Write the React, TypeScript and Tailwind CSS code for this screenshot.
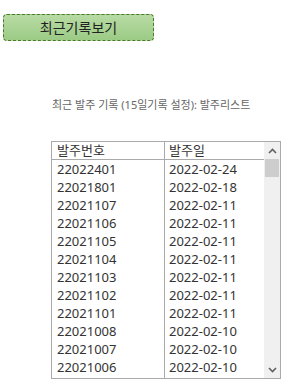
import React from "react";

const rows: [string, string][] = [
  ["22022401", "2022-02-24"],
  ["22021801", "2022-02-18"],
  ["22021107", "2022-02-11"],
  ["22021106", "2022-02-11"],
  ["22021105", "2022-02-11"],
  ["22021104", "2022-02-11"],
  ["22021103", "2022-02-11"],
  ["22021102", "2022-02-11"],
  ["22021101", "2022-02-11"],
  ["22021008", "2022-02-10"],
  ["22021007", "2022-02-10"],
  ["22021006", "2022-02-10"],
];

const font = { fontFamily: '"Noto Sans", "Noto Sans CJK KR", sans-serif' };

const App = () => {
  return (
    <div className="w-[291px] h-[392px] bg-white relative" style={font}>
      {/* 버튼 */}
      <div className="pt-[14px] pl-[3px]">
        <button className="w-[151px] h-[27px] rounded-[4px] border border-dashed border-[#4a7a2c] bg-gradient-to-b from-[#b8dba4] to-[#9bcb85] text-[14px] text-[#222] flex items-center justify-center">
          최근기록보기
        </button>
      </div>

      {/* 설명 */}
      <p className="mt-[57px] ml-[52px] text-[11px] leading-[14px] text-[#666]">
        최근 발주 기록 (15일기록 설정): 발주리스트
      </p>

      {/* 리스트 */}
      <div className="mt-[29px] ml-[51px] w-[230px] h-[238px] border border-[#aaa] flex overflow-hidden">
        <div className="flex-1 flex flex-col">
          <div className="flex h-[18px] border-b border-[#aaa] text-[13px] leading-[17px] text-[#333]">
            <div className="w-[113px] border-r border-[#aaa] pl-[5px]">발주번호</div>
            <div className="flex-1 pl-[4px]">발주일</div>
          </div>
          {rows.map(([no, date]) => (
            <div key={no} className="flex h-[18px] shrink-0 text-[13px] leading-[18px] text-[#333]">
              <div className="w-[113px] border-r border-[#aaa] pl-[5px]">{no}</div>
              <div className="flex-1 pl-[4px]">{date}</div>
            </div>
          ))}
          <div className="flex flex-1">
            <div className="w-[113px] border-r border-[#aaa]" />
          </div>
        </div>

        {/* 스크롤바 */}
        <div className="w-[16px] bg-[#f0f0f0] flex flex-col">
          <div className="h-[17px] flex items-center justify-center">
            <svg width="9" height="6" viewBox="0 0 9 6">
              <path d="M1 5 L4.5 1.5 L8 5" stroke="#606060" strokeWidth="1.6" fill="none" />
            </svg>
          </div>
          <div className="h-[18px] mx-[1px] bg-[#cdcdcd]" />
          <div className="flex-1" />
          <div className="h-[17px] flex items-center justify-center">
            <svg width="9" height="6" viewBox="0 0 9 6">
              <path d="M1 1 L4.5 4.5 L8 1" stroke="#606060" strokeWidth="1.6" fill="none" />
            </svg>
          </div>
        </div>
      </div>
    </div>
  );
};

export default App;
